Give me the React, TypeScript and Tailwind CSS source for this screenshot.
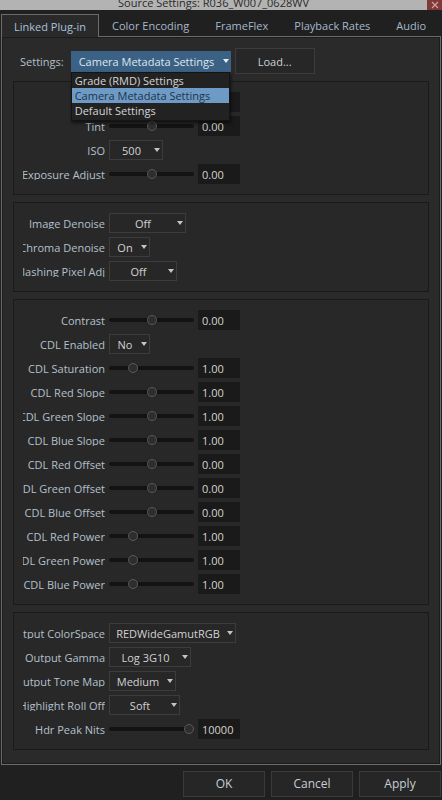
import React from 'react';
import clsx from 'clsx';

type SliderRow = { kind: 'slider'; label: string; pos: number; value: string };
type ComboRow = { kind: 'combo'; label: string; value: string; w: string };
type Row = SliderRow | ComboRow;

const groups: Row[][] = [
  [
    { kind: 'slider', label: 'Kelvin', pos: 0.5, value: '' },
    { kind: 'slider', label: 'Tint', pos: 0.5, value: '0.00' },
    { kind: 'combo', label: 'ISO', value: '500', w: 'w-[54px]' },
    { kind: 'slider', label: 'Exposure Adjust', pos: 0.5, value: '0.00' },
  ],
  [
    { kind: 'combo', label: 'Image Denoise', value: 'Off', w: 'w-[77px]' },
    { kind: 'combo', label: 'Chroma Denoise', value: 'On', w: 'w-[41px]' },
    { kind: 'combo', label: 'Flashing Pixel Adj', value: 'Off', w: 'w-[68px]' },
  ],
  [
    { kind: 'slider', label: 'Contrast', pos: 0.5, value: '0.00' },
    { kind: 'combo', label: 'CDL Enabled', value: 'No', w: 'w-[41px]' },
    { kind: 'slider', label: 'CDL Saturation', pos: 0.25, value: '1.00' },
    { kind: 'slider', label: 'CDL Red Slope', pos: 0.5, value: '1.00' },
    { kind: 'slider', label: 'CDL Green Slope', pos: 0.5, value: '1.00' },
    { kind: 'slider', label: 'CDL Blue Slope', pos: 0.5, value: '1.00' },
    { kind: 'slider', label: 'CDL Red Offset', pos: 0.5, value: '0.00' },
    { kind: 'slider', label: 'CDL Green Offset', pos: 0.5, value: '0.00' },
    { kind: 'slider', label: 'CDL Blue Offset', pos: 0.5, value: '0.00' },
    { kind: 'slider', label: 'CDL Red Power', pos: 0.25, value: '1.00' },
    { kind: 'slider', label: 'CDL Green Power', pos: 0.25, value: '1.00' },
    { kind: 'slider', label: 'CDL Blue Power', pos: 0.25, value: '1.00' },
  ],
  [
    { kind: 'combo', label: 'Output ColorSpace', value: 'REDWideGamutRGB', w: 'w-[127px]' },
    { kind: 'combo', label: 'Output Gamma', value: 'Log 3G10', w: 'w-[82px]' },
    { kind: 'combo', label: 'Output Tone Map', value: 'Medium', w: 'w-[67px]' },
    { kind: 'combo', label: 'Highlight Roll Off', value: 'Soft', w: 'w-[71px]' },
    { kind: 'slider', label: 'Hdr Peak Nits', pos: 1, value: '10000' },
  ],
];

const tabs = ['Linked Plug-in', 'Color Encoding', 'FrameFlex', 'Playback Rates', 'Audio'];

const Arrow: React.FC<{ color?: string }> = ({ color = '#c4c4c4' }) => (
  <span className="mr-[1px] flex w-[8px] shrink-0 items-center justify-center">
    <svg width="6" height="4" viewBox="0 0 6 4">
      <path d="M0 0H6L3 4Z" fill={color} />
    </svg>
  </span>
);

const Combo: React.FC<{ value: string; w: string }> = ({ value, w }) => (
  <div className={clsx('flex h-5 items-center border border-[#3c3c3c] bg-[#272727] text-[#d2d2d2]', w)}>
    <span className="flex-1 text-center whitespace-nowrap">{value}</span>
    <Arrow />
  </div>
);

// track is 85px wide, the thumb travels between 5px and 80px
const Slider: React.FC<{ pos: number }> = ({ pos }) => (
  <div className="relative flex h-5 w-[85px] items-center">
    <div className="h-[4px] w-full rounded-full bg-[#131313]" />
    <div
      className="absolute top-[5px] h-[10px] w-[10px] rounded-full border border-[#5a5a5a] bg-[#2e2e2e]"
      style={{ left: pos * 75 }}
    />
  </div>
);

const Field: React.FC<{ row: Row }> = ({ row }) => (
  <div className="flex h-5 items-center">
    <div className="flex w-[82px] shrink-0 justify-end overflow-hidden">
      <span className="shrink-0 whitespace-nowrap text-[#b4c0cc]">{row.label}</span>
    </div>
    <div className="ml-[4px] flex items-center">
      {row.kind === 'combo' ? (
        <Combo value={row.value} w={row.w} />
      ) : (
        <>
          <Slider pos={row.pos} />
          <div className="ml-[4px] flex h-5 w-[42px] items-center bg-[#1a1a1a] pl-[4px] text-[#d6d3ca]">
            {row.value}
          </div>
        </>
      )}
    </div>
  </div>
);

export default function App() {
  return (
    <div className="flex h-[800px] w-[442px] flex-col overflow-hidden bg-[#202020] font-['Open_Sans',sans-serif] text-[11px] leading-none">
      {/* title bar */}
      <div className="flex h-[10px] shrink-0 bg-[#b3b3b3]">
        <div className="flex flex-1 justify-center overflow-hidden">
          <span className="-mt-[4px] whitespace-nowrap text-[11px] leading-[14px] text-[#2a2a2a]">
            Source Settings: R036_W007_0628WV
          </span>
        </div>
        <div className="flex w-[15px] items-center justify-center bg-[#7e3939]">
          <svg width="8" height="8" viewBox="0 0 8 8">
            <path d="M1 1L7 7M7 1L1 7" stroke="#d99a9a" strokeWidth="1.3" />
          </svg>
        </div>
      </div>

      {/* tabs */}
      <div className="flex h-[26px] shrink-0 items-end pl-[1px] pt-[4px]">
        {tabs.map((t, i) => (
          <div
            key={t}
            className={clsx(
              'flex h-[22px] items-center px-[12px] whitespace-nowrap',
              i === 0
                ? 'relative z-10 -mb-px h-[23px] border-x border-t border-[#6b6b6b] bg-[#2a2a2a] text-[#a9c2dc]'
                : 'px-[13px] text-[#a6b8cb]'
            )}
          >
            {t}
          </div>
        ))}
      </div>

      {/* tab page */}
      <div className="ml-[1px] flex w-[440px] shrink-0 flex-col gap-[7px] border border-[#6b6b6b] bg-[#2a2a2a] px-[11px] pb-[14px] pt-[11px] shadow-[inset_0_0_0_1px_#1c1c1c]">
        <div className="flex h-[26px] items-center pl-[7px]">
          <span className="text-[#b4c0cc]">Settings:</span>
          <div className="relative ml-[7px]">
            <div className="flex h-[21px] w-[160px] items-center bg-[#3b6184] pl-[8px] text-[#dde6ee]">
              <span className="flex-1 whitespace-nowrap">Camera Metadata Settings</span>
              <Arrow color="#e8eef4" />
            </div>
            <div className="absolute left-0 top-full z-20 flex w-[159px] flex-col border border-[#141414] bg-[#222222] pb-[2px] text-[#d4d4d4] shadow-[1px_2px_3px_rgba(0,0,0,0.6)]">
              <div className="flex h-[15px] items-center pl-[3px]">Grade (RMD) Settings</div>
              <div className="flex h-[15px] items-center bg-[#6e9bc6] pl-[3px] text-[#1f3349]">
                Camera Metadata Settings
              </div>
              <div className="flex h-[15px] items-center pl-[3px]">Default Settings</div>
            </div>
          </div>
          <button className="ml-[4px] h-[26px] w-[80px] border border-[#3c3c3c] bg-[#272727] text-[#c9d2db]">
            Load...
          </button>
        </div>

        {groups.map((g, gi) => (
          <div key={gi} className="flex flex-col gap-1 border border-[#1a1a1a] bg-[#282828] py-[10px] pl-[9px]">
            {g.map((row) => (
              <Field key={row.label} row={row} />
            ))}
          </div>
        ))}
      </div>

      {/* dialog buttons */}
      <div className="mt-[6px] flex justify-end gap-[6px] pr-[1px]">
        {['OK', 'Cancel', 'Apply'].map((b) => (
          <button
            key={b}
            className="h-[26px] w-[82px] border border-[#3a3a3a] bg-[#262626] text-[12px] text-[#c6ced6]"
          >
            {b}
          </button>
        ))}
      </div>
    </div>
  );
}
